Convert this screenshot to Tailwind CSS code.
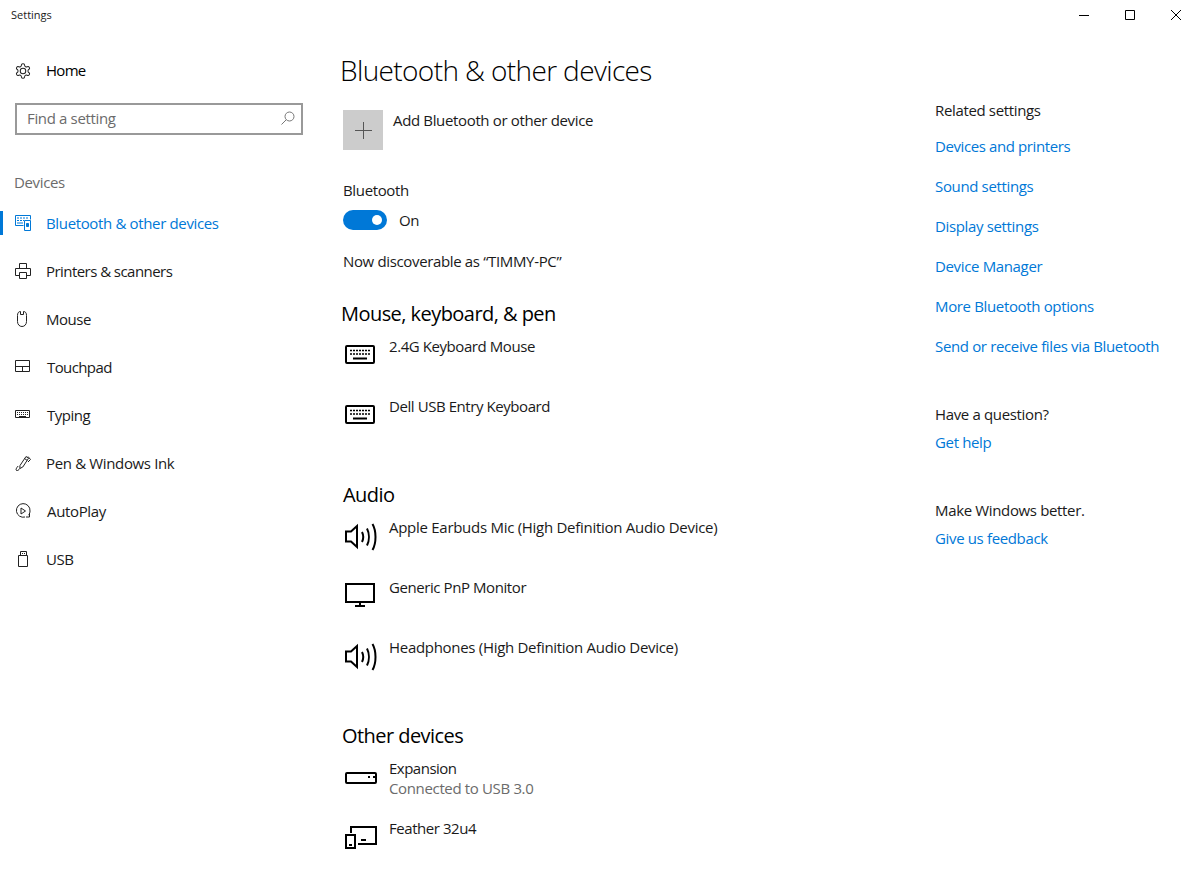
<!DOCTYPE html>
<html lang="en">
<head>
    <meta charset="UTF-8">
    <title>Settings</title>
    <script src="https://cdn.jsdelivr.net/npm/@tailwindcss/browser@4"></script>
</head>
<body class="bg-white text-[15px] leading-5 text-[#1a1a1a] font-['Open_Sans',sans-serif] tracking-[-0.35px] w-[1199px] h-[869px] overflow-hidden">
    <!-- title bar -->
    <header class="h-[30px] flex items-center justify-between">
        <span class="pl-[11px] text-[11px] tracking-normal">Settings</span>
        <div class="flex pr-[18px] gap-[36px]">
            <svg class="w-[10px] h-[10px]" viewBox="0 0 10 10" fill="none" stroke="#000"><path d="M0 5.5h10"/></svg>
            <svg class="w-[10px] h-[10px]" viewBox="0 0 10 10" fill="none" stroke="#000"><path d="M.5.5h9v9h-9z"/></svg>
            <svg class="w-[10px] h-[10px]" viewBox="0 0 10 10" fill="none" stroke="#000"><path d="M0 0l10 10M10 0L0 10"/></svg>
        </div>
    </header>

    <div class="flex">
        <!-- sidebar -->
        <aside class="w-[341px] shrink-0">
            <div class="mt-[30px] h-5 flex items-center pl-[15px] text-black">
                <svg class="w-4 h-4 mr-[15px] mt-[2px]" viewBox="1 1 22 22" fill="none" stroke="#222" stroke-width="1.4"><path d="M12.22 2h-.44a2 2 0 0 0-2 2v.18a2 2 0 0 1-1 1.73l-.43.25a2 2 0 0 1-2 0l-.15-.08a2 2 0 0 0-2.73.73l-.22.38a2 2 0 0 0 .73 2.73l.15.1a2 2 0 0 1 1 1.72v.51a2 2 0 0 1-1 1.74l-.15.09a2 2 0 0 0-.73 2.73l.22.38a2 2 0 0 0 2.73.73l.15-.08a2 2 0 0 1 2 0l.43.25a2 2 0 0 1 1 1.73V20a2 2 0 0 0 2 2h.44a2 2 0 0 0 2-2v-.18a2 2 0 0 1 1-1.73l.43-.25a2 2 0 0 1 2 0l.15.08a2 2 0 0 0 2.73-.73l.22-.39a2 2 0 0 0-.73-2.73l-.15-.08a2 2 0 0 1-1-1.74v-.5a2 2 0 0 1 1-1.74l.15-.09a2 2 0 0 0 .73-2.73l-.22-.38a2 2 0 0 0-2.73-.73l-.15.08a2 2 0 0 1-2 0l-.43-.25a2 2 0 0 1-1-1.73V4a2 2 0 0 0-2-2z"/><circle cx="12" cy="12" r="3.8"/></svg>
                <span class="tracking-[-0.7px]">Home</span>
            </div>
            <div class="mt-[23px] ml-[15px] w-[288px] h-[32px] border-2 border-[#999] flex items-center justify-between pl-[10px] pr-[6px] text-[#6b6b6b]">
                <span class="mb-[2px]">Find a setting</span>
                <svg class="w-[14px] h-[14px] mb-[2px]" viewBox="0 0 14 14" fill="none" stroke="#777"><circle cx="8.5" cy="5.5" r="4.5"/><path d="M5.3 8.700L.5 13.500"/></svg>
            </div>
            <div class="mt-[37px] pl-[14px] text-[#6b6b6b]">Devices</div>

            <nav class="mt-[7px]">
                <div class="h-12 flex items-center pl-[15px] relative text-[#0078d7]">
                    <span class="absolute left-0 top-3 w-[3px] h-6 bg-[#0078d7]"></span>
                    <svg class="w-4 h-4 mr-[15px]" viewBox="0 0 16 16" fill="none" stroke="#0078d7"><path d="M8.500 10.500h-8v-10h15v4"/><path d="M2 3h2M5 3h2M8 3h2M11 3h2M2 5.500h2M5 5.500h2M8 5.500h1M2 8h6" stroke-width="1.200"/><path d="M9.500 5.500h6v10h-6z"/><path d="M11.500 8.500h2v3h-2z" fill="#0078d7"/></svg>
                    <span>Bluetooth &amp; other devices</span>
                </div>
                <div class="h-12 flex items-center pl-[15px]">
                    <svg class="w-4 h-4 mr-[15px]" viewBox="0 0 16 16" fill="none" stroke="#222"><path d="M4.500 6V.5h7V6M4.500 12.500h-4v-7h15v7h-4"/><path d="M4.500 9.500h7v6h-7z"/></svg>
                    <span class="tracking-[-0.55px]">Printers &amp; scanners</span>
                </div>
                <div class="h-12 flex items-center pl-[15px]">
                    <svg class="w-4 h-4 mr-[15px]" viewBox="0 0 16 16" fill="none" stroke="#222"><path d="M2.500 4.500C2.500 2 3.500.5 5.500.5v3h3v-3c2 0 3 1.500 3 4v6c0 3-2 5-4.500 5s-4.500-2-4.500-5z"/></svg>
                    <span class="tracking-[-0.45px]">Mouse</span>
                </div>
                <div class="h-12 flex items-center pl-[15px]">
                    <svg class="w-4 h-4 mr-[16px]" viewBox="0 0 16 16" fill="none" stroke="#222"><path d="M.5 1.500h14v11H.5zM.5 7.500h14M7.500 7.500v5"/></svg>
                    <span class="tracking-[-0.6px]">Touchpad</span>
                </div>
                <div class="h-12 flex items-center pl-[15px]">
                    <svg class="w-4 h-4 mr-[16px]" viewBox="0 0 16 16" fill="none" stroke="#222"><path d="M.5 3.500h14v7H.5z"/><path d="M2 5.500h11M2 7.500h11" stroke-dasharray="1 1"/><path d="M4 9.500h7"/></svg>
                    <span class="tracking-[-0.5px]">Typing</span>
                </div>
                <div class="h-12 flex items-center pl-[15px]">
                    <svg class="w-4 h-4 mr-[15px]" viewBox="0 0 16 16" fill="none" stroke="#222"><path d="M5 10.500L11 1.500l2.500 1.800L7.800 12l-3 1.500zM9.500 3.500l2.800 2M13 1.500l2.500 3-2.500 2.500M4.800 13.500c-1 1.500-2.300 2.500-3.300 2s-.3-2.500 1.700-4.500"/></svg>
                    <span>Pen &amp; Windows Ink</span>
                </div>
                <div class="h-12 flex items-center pl-[15px]">
                    <svg class="w-4 h-4 mr-[16px]" viewBox="0 0 16 16" fill="none" stroke="#222"><path d="M10 14A6.800 6.800 0 1 1 15 8c0 1.500-.5 3-1.500 4.200"/><path d="M6 5l4.500 3L6 11zM14.500 10v4H11"/></svg>
                    <span>AutoPlay</span>
                </div>
                <div class="h-12 flex items-center pl-[15px]">
                    <svg class="w-4 h-4 mr-[15px]" viewBox="0 0 16 16" fill="none" stroke="#222"><path d="M5.500.5h6v4h-6zM3.500 4.500h9v11h-9zM7 2.500h1M9 2.500h1"/></svg>
                    <span class="tracking-[-0.5px]">USB</span>
                </div>
            </nav>
        </aside>

        <!-- main column -->
        <main class="w-[594px] shrink-0">
            <h1 class="mt-[20px] -ml-px h-10 leading-10 text-[28px] font-light tracking-[-0.62px] text-black">Bluetooth &amp; other devices</h1>

            <div class="mt-[20px] ml-[2px] flex">
                <div class="w-10 h-10 bg-[#cccccc] flex items-center justify-center">
                    <svg class="w-5 h-5" viewBox="0 0 20 20" fill="none" stroke="#555"><path d="M10.500 2v17M2 10.500h17"/></svg>
                </div>
                <span class="ml-[10px]">Add Bluetooth or other device</span>
            </div>

            <div class="mt-[30px] ml-[2px]">Bluetooth</div>
            <div class="mt-[10px] ml-[2px] flex items-center">
                <span class="w-11 h-5 rounded-full bg-[#0078d7] flex items-center justify-end pr-[5px]"><span class="w-[10px] h-[10px] rounded-full bg-white"></span></span>
                <span class="ml-3">On</span>
            </div>
            <div class="mt-[21px] ml-[2px]">Now discoverable as “TIMMY-PC”</div>

            <h2 class="mt-[29px] mb-[8px] h-7 leading-7 text-[20px] tracking-[-0.55px] text-black">Mouse, keyboard, &amp; pen</h2>
            <div class="h-[60px] ml-[4px] flex">
                <svg class="w-[30px] h-[30px] mt-[4px] mr-[14px]" viewBox="0 0 30 30" fill="none" stroke="#000" stroke-width="2"><rect x="1" y="6" width="28" height="17" rx="1"/><path d="M5 10.500h20M5 14h20" stroke-width="1.500" stroke-dasharray="2 1"/><path d="M8 18.500h14"/></svg>
                <span class="tracking-[-0.43px]">2.4G Keyboard Mouse</span>
            </div>
            <div class="h-[60px] ml-[4px] flex">
                <svg class="w-[30px] h-[30px] mt-[4px] mr-[14px]" viewBox="0 0 30 30" fill="none" stroke="#000" stroke-width="2"><rect x="1" y="6" width="28" height="17" rx="1"/><path d="M5 10.500h20M5 14h20" stroke-width="1.500" stroke-dasharray="2 1"/><path d="M8 18.500h14"/></svg>
                <span class="tracking-[-0.43px]">Dell USB Entry Keyboard</span>
            </div>

            <h2 class="mt-[25px] mb-[8px] h-7 leading-7 text-[20px] tracking-[-0.55px] ml-[2px] text-black">Audio</h2>
            <div class="h-[60px] ml-[4px] flex">
                <svg class="w-[34px] h-[30px] mt-[5px] mr-[10px]" viewBox="0 0 34 30" fill="none" stroke="#000" stroke-width="2"><path d="M1 9.500h5L12 4v21l-6-5.500H1z"/><path d="M17 10c1.500 3 1.500 7 0 10M22 6.500c2.500 5 2.500 12 0 17M27.500 2c4 7 4 19 0 26"/></svg>
                <span class="tracking-[-0.28px]">Apple Earbuds Mic (High Definition Audio Device)</span>
            </div>
            <div class="h-[60px] ml-[4px] flex">
                <svg class="w-[30px] h-[30px] mt-[2px] mr-[14px]" viewBox="0 0 30 30" fill="none" stroke="#000" stroke-width="2"><path d="M1 5h28v18H1zM15 23v4M10 27h10"/></svg>
                <span class="tracking-[-0.42px]">Generic PnP Monitor</span>
            </div>
            <div class="h-[60px] ml-[4px] flex">
                <svg class="w-[34px] h-[30px] mt-[5px] mr-[10px]" viewBox="0 0 34 30" fill="none" stroke="#000" stroke-width="2"><path d="M1 9.500h5L12 4v21l-6-5.500H1z"/><path d="M17 10c1.500 3 1.500 7 0 10M22 6.500c2.500 5 2.500 12 0 17M27.500 2c4 7 4 19 0 26"/></svg>
                <span class="tracking-[-0.3px]">Headphones (High Definition Audio Device)</span>
            </div>

            <h2 class="mt-[25px] mb-[8px] h-7 leading-7 text-[20px] tracking-[-0.55px] ml-[1px] text-black">Other devices</h2>
            <div class="h-[60px] ml-[4px] flex">
                <svg class="w-[32px] h-[30px] mt-[10px] mr-[12px]" viewBox="0 0 32 30" fill="none" stroke="#000" stroke-width="2"><rect x="1" y="5" width="30" height="10" rx="1"/><path d="M23 9h2M28 9h2"/></svg>
                <div>
                    <div class="tracking-[-0.5px]">Expansion</div>
                    <div class="text-[#6b6b6b]">Connected to USB 3.0</div>
                </div>
            </div>
            <div class="h-[60px] ml-[4px] flex">
                <svg class="w-8 h-8 mr-[12px]" viewBox="0 0 32 32" fill="none" stroke="#000" stroke-width="2"><path d="M6 15V9h25v17H13M16 22h5"/><path d="M1 17h9v13H1zM4 27h3"/></svg>
                <span class="tracking-[-0.45px]">Feather 32u4</span>
            </div>
        </main>

        <!-- related links -->
        <section class="flex-1 text-[#0078d7]">
            <div class="mt-[70px] text-[#1a1a1a]">Related settings</div>
            <div class="mt-4 tracking-[-0.4px]">Devices and printers</div>
            <div class="mt-5">Sound settings</div>
            <div class="mt-5">Display settings</div>
            <div class="mt-5">Device Manager</div>
            <div class="mt-5">More Bluetooth options</div>
            <div class="mt-5">Send or receive files via Bluetooth</div>
            <div class="mt-[48px] text-[#1a1a1a]">Have a question?</div>
            <div class="mt-2">Get help</div>
            <div class="mt-[48px] text-[#1a1a1a]">Make Windows better.</div>
            <div class="mt-2">Give us feedback</div>
        </section>
    </div>
</body>
</html>
